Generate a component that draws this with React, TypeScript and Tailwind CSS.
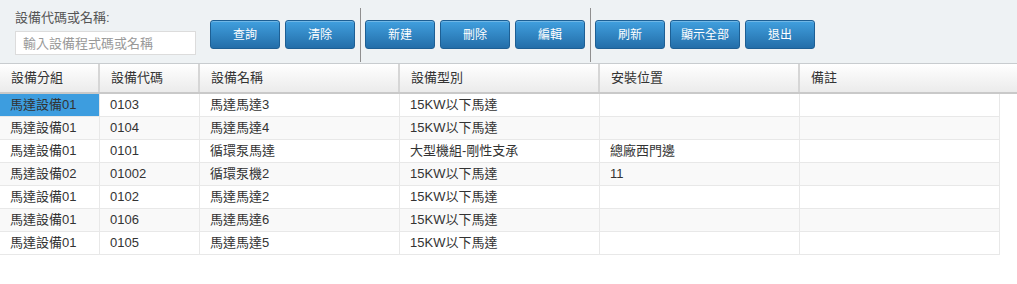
import React from "react";

const rows = [
  ["馬達設備01", "0103", "馬達馬達3", "15KW以下馬達", "", ""],
  ["馬達設備01", "0104", "馬達馬達4", "15KW以下馬達", "", ""],
  ["馬達設備01", "0101", "循環泵馬達", "大型機組-剛性支承", "總廠西門邊", ""],
  ["馬達設備02", "01002", "循環泵機2", "15KW以下馬達", "11", ""],
  ["馬達設備01", "0102", "馬達馬達2", "15KW以下馬達", "", ""],
  ["馬達設備01", "0106", "馬達馬達6", "15KW以下馬達", "", ""],
  ["馬達設備01", "0105", "馬達馬達5", "15KW以下馬達", "", ""],
];

const headers = ["設備分組", "設備代碼", "設備名稱", "設備型別", "安裝位置", "備註"];
const widths = ["w-[100px]", "w-[100px]", "w-[200px]", "w-[200px]", "w-[200px]", "w-[200px]"];

function Btn({ label }: { label: string }) {
  return (
    <button className="w-[70px] h-[29px] rounded-[3px] border border-[#1d5f94] bg-gradient-to-b from-[#41a0df] to-[#236ea9] text-white text-[12px] leading-none shadow-[inset_0_1px_0_rgba(255,255,255,0.25)]">
      {label}
    </button>
  );
}

function Sep() {
  return <div className="w-px h-[54px] bg-[#8f8f8f] mt-[8px] ml-[5px] mr-[4px]" />;
}

export default function App() {
  return (
    <div
      className="w-[1017px] h-[284px] bg-white text-[#333]"
      style={{ fontFamily: '"Liberation Sans", "Noto Sans CJK TC", sans-serif' }}
    >
      {/* toolbar */}
      <div className="h-[64px] bg-[#eef2f4] border-b border-[#c8cccf] flex items-start pl-[15px]">
        <div className="w-[181px] pt-[9px]">
          <div className="text-[13px] text-[#555] leading-[17px]">設備代碼或名稱:</div>
          <input
            className="mt-[5px] w-[181px] h-[24px] bg-white border border-[#dcdcdc] px-[7px] text-[13px] outline-none placeholder-[#999]"
            placeholder="輸入設備程式碼或名稱"
          />
        </div>
        <div className="flex gap-[5px] mt-[20px] ml-[14px]">
          <Btn label="查詢" />
          <Btn label="清除" />
        </div>
        <Sep />
        <div className="flex gap-[5px] mt-[20px]">
          <Btn label="新建" />
          <Btn label="刪除" />
          <Btn label="編輯" />
        </div>
        <Sep />
        <div className="flex gap-[5px] mt-[20px]">
          <Btn label="刷新" />
          <Btn label="顯示全部" />
          <Btn label="退出" />
        </div>
      </div>

      {/* header */}
      <div className="flex h-[30px] bg-gradient-to-b from-[#ffffff] to-[#ebebeb] border-b-2 border-[#c9c9c9]">
        {headers.map((h, i) => (
          <div
            key={h}
            className={`${widths[i]} h-full flex items-center px-[11px] text-[13px] text-[#333] ${i < headers.length - 1 ? "border-r-2 border-[#d6d6d6]" : ""}`}
          >
            {h}
          </div>
        ))}
      </div>

      {/* body */}
      <div className="w-[1000px]">
        {rows.map((r, ri) => (
          <div
            key={ri}
            className={`flex h-[23px] border-b border-[#e8e8e8] ${ri % 2 === 1 ? "bg-[#f9f9f9]" : "bg-white"}`}
          >
            {r.map((c, ci) => (
              <div
                key={ci}
                className={`${widths[ci]} h-full flex items-center px-[10px] text-[13px] text-[#333] border-r border-[#e8e8e8] ${ri === 0 && ci === 0 ? "bg-[#3d9ddf]" : ""}`}
              >
                {c}
              </div>
            ))}
          </div>
        ))}
      </div>
    </div>
  );
}
